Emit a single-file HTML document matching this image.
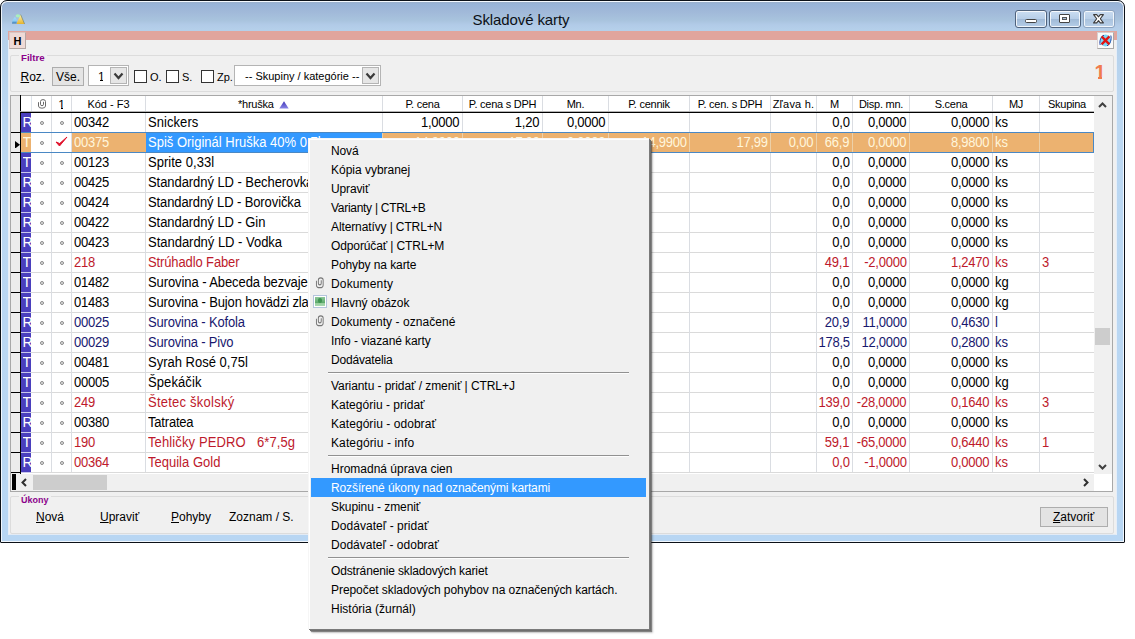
<!DOCTYPE html>
<html lang="sk"><head><meta charset="utf-8"><title>Skladové karty</title>
<style>
*{box-sizing:border-box;margin:0;padding:0}
html,body{width:1135px;height:639px;overflow:hidden;background:#fff}
body{position:relative;font-family:"Liberation Sans",sans-serif;font-size:13px;color:#000}
.a{position:absolute}
.t{position:absolute;white-space:nowrap;line-height:1}
#win{left:0;top:0;width:1125px;height:543px;border:1px solid #0c1118;border-radius:7px 7px 1px 1px;
 background:linear-gradient(180deg,#9caec4 0,#98b4d8 3px,#a1b9d9 11px,#a8c3dd 19px,#b2cbe8 24px,#b5d0ea 29px,#bcd8f2 110px,#b8d6f3 100%);box-shadow:inset 0 1px 0 0 rgba(245,250,255,.95),inset 0 0 0 1px rgba(255,255,255,.8)}
#client{left:8px;top:31px;width:1109px;height:504px;background:#f0f0f0;box-shadow:inset 1px 0 0 #e6eef8,inset -1px 0 0 #e6eef8,inset 0 -1px 0 #e3ebf5}
#title{left:0;width:1042px;top:12px;text-align:center;font-size:15px;letter-spacing:-0.1px;color:#0c1016}
.cb{top:10px;height:18px;border:1px solid #4f627c;border-radius:3px;background:linear-gradient(180deg,#cbdef2 0,#b7cee8 48%,#a0bad7 52%,#b6cee8 100%);box-shadow:inset 0 0 0 1px rgba(255,255,255,.8)}
.g{font-size:13px}
.h{font-size:11px;top:99px;letter-spacing:-0.25px}
.cell{position:absolute;white-space:nowrap;line-height:19px;height:19px;overflow:hidden;font-size:14px;transform:scaleX(.9286);transform-origin:0 50%}
.cr{transform-origin:100% 50%;text-align:right;overflow:visible}
.mi{position:absolute;left:23px;white-space:nowrap;font-size:12px;line-height:19px;height:19px;color:#000}
.sep{position:absolute;left:21px;width:300px;height:1px;background:#a0a0a0}
u{text-decoration:underline}
</style></head><body>
<div id="win" class="a"></div>

<div id="title" class="t">Skladové karty</div>
<svg class="a" style="left:10px;top:12px" width="17" height="14" viewBox="10 12 17 14"><defs><linearGradient id="iy" x1="0" y1="0" x2="0" y2="1"><stop offset="0" stop-color="#fdf3b0"/><stop offset="1" stop-color="#e6b42e"/></linearGradient><linearGradient id="ib" x1="0" y1="0" x2="0" y2="1"><stop offset="0" stop-color="#a6dcfa"/><stop offset=".6" stop-color="#8ccdf5"/><stop offset="1" stop-color="#2f6fa8"/></linearGradient></defs><polygon points="20.6,14.6 24.6,23.9 16.4,23.9" fill="url(#iy)"/><path d="M20.6 14.6 L24.6 23.9" stroke="#5f6f55" stroke-width=".8" fill="none" opacity=".7"/><ellipse cx="17.9" cy="15.8" rx="2.3" ry="1.6" fill="#a9f0bc"/><polygon points="15,16.8 17,20 16.6,23.6 12,23.6 12.6,20" fill="url(#ib)"/></svg>
<div class="a cb" style="left:1015px;width:32px"></div>
<div class="a cb" style="left:1049px;width:32px"></div>
<div class="a cb" style="left:1083px;width:32px;background:linear-gradient(180deg,#cadcf0 0,#bad0e9 48%,#aac3de 52%,#bad1ea 100%);border-color:#8ea4c0"></div>
<div class="a" style="left:1025px;top:18.5px;width:12px;height:4.5px;border:1px solid #444;border-radius:1.5px;background:#fff"></div>
<div class="a" style="left:1059px;top:14px;width:11px;height:9px;border:1px solid #444;border-radius:1px;background:#fff"></div><div class="a" style="left:1062px;top:17px;width:5px;height:3px;border:1px solid #555;background:#a9bfd8"></div>
<svg class="a" style="left:1093px;top:13.5px" width="11" height="10" viewBox="0 0 11 10"><path d="M0.6 0.6 L3.7 0.6 L5.5 2.9 L7.3 0.6 L10.4 0.6 L7.3 4.75 L10.4 8.9 L7.3 8.9 L5.5 6.6 L3.7 8.9 L0.6 8.9 L3.7 4.75 Z" fill="#fff" stroke="#3c3c3c" stroke-width="1.1" stroke-linejoin="round"/></svg>
<div id="client" class="a"></div>
<div class="a" style="left:8px;top:31px;width:1109px;height:9px;background:#e1a59d"></div>
<div class="a" style="left:9px;top:32px;width:17px;height:17px;border:1px solid #b3a7a4;border-top-color:#d9c6c2;border-left-color:#d9c6c2;background:#eedad6"></div><div class="t" style="left:13.5px;top:35.5px;font-size:11px;font-weight:bold">H</div>
<div class="a" style="left:1097px;top:32px;width:17px;height:17px;border:1px solid #d8d0d0;border-right-color:#a8a8a8;border-bottom-color:#a8a8a8;background:#fafafa"></div>
<svg class="a" style="left:1098px;top:33px" width="15" height="15" viewBox="0 0 15 15"><ellipse cx="7.5" cy="7.5" rx="5.6" ry="6" fill="#7ad8f8"/><path d="M2.2 12 C1 8,3 3.5,6 2.2" fill="none" stroke="#2848a8" stroke-width="1"/><path d="M12.8 2.5 C14 6.5,12 11.5,9 12.8" fill="none" stroke="#2848a8" stroke-width="1"/><path d="M3.6 3.4 L11.4 11.4 M11.4 3.4 L3.6 11.4" stroke="#e01414" stroke-width="2.3" fill="none"/></svg>
<div class="a" style="left:10px;top:55px;width:1104px;height:37px;border:1px solid #dcdcdc;border-radius:2px"></div>
<div class="t" style="left:19px;top:53px;font-size:9.7px;font-weight:bold;color:#8b008b;background:#f0f0f0;padding:0 2px">Filtre</div>
<div class="t" style="left:20.5px;top:70.5px;font-size:12px"><u>R</u>oz.</div>
<div class="a" style="left:52px;top:67px;width:32px;height:19px;border:1px solid #adadad;background:#e4e4e4"></div><div class="t" style="left:56px;top:70.5px;font-size:12px">Vše.</div>
<div class="a" style="left:88px;top:65px;width:41px;height:21px;border:1px solid #b4b4b4;background:#fff"></div><div class="t" style="left:98px;top:70.5px;font-size:12px">1</div>
<div class="a" style="left:97px;top:79.4px;width:3.4px;height:2.4px;background:#fff"></div><div class="a" style="left:102.6px;top:79.4px;width:3.2px;height:2.4px;background:#fff"></div>
<div class="a" style="left:110px;top:67px;width:17px;height:17px;border:1px solid #b4b4b4;background:#e6e6e6"></div>
<svg class="a" style="left:113px;top:72px" width="11" height="8" viewBox="0 0 11 8"><path d="M1.5 1.5 L5.5 6 L9.5 1.5" fill="none" stroke="#3a3a3a" stroke-width="2.2"/></svg>
<div class="a" style="left:134px;top:70px;width:13px;height:13px;border:1px solid #333;background:#fff"></div><div class="t" style="left:150px;top:72px;font-size:11px">O.</div>
<div class="a" style="left:166px;top:70px;width:13px;height:13px;border:1px solid #333;background:#fff"></div><div class="t" style="left:182px;top:72px;font-size:11px">S.</div>
<div class="a" style="left:201px;top:70px;width:13px;height:13px;border:1px solid #333;background:#fff"></div><div class="t" style="left:217px;top:72px;font-size:11px">Zp.</div>
<div class="a" style="left:234px;top:65px;width:147px;height:21px;border:1px solid #b4b4b4;background:#fff"></div><div class="t" style="left:245px;top:71px;font-size:11px">-- Skupiny / kategórie --</div>
<div class="a" style="left:362px;top:67px;width:17px;height:17px;border:1px solid #b4b4b4;background:#e6e6e6"></div>
<svg class="a" style="left:365px;top:72px" width="11" height="8" viewBox="0 0 11 8"><path d="M1.5 1.5 L5.5 6 L9.5 1.5" fill="none" stroke="#3a3a3a" stroke-width="2.2"/></svg>
<div class="t" style="left:1094.6px;top:62px;font-size:20px;font-weight:bold;color:#f07c4c">1</div>
<div class="a" style="left:1093px;top:76.6px;width:5.4px;height:4px;background:#f0f0f0"></div><div class="a" style="left:1102.4px;top:76.6px;width:5px;height:4px;background:#f0f0f0"></div>
<div class="a" style="left:10px;top:95px;width:1103px;height:397px;background:#fff;border:1px solid #a8a8a8"></div>
<div class="a" style="left:21px;top:96px;width:1073px;height:16px;background:#fff"></div>
<div class="a" style="left:11px;top:96px;width:9px;height:378px;background:#ececec"></div>
<div class="a" style="left:11px;top:132px;width:9px;height:1px;background:#000"></div>
<div class="a" style="left:31px;top:132px;width:1063px;height:1px;background:#dadada"></div>
<div class="a" style="left:11px;top:152px;width:9px;height:1px;background:#000"></div>
<div class="a" style="left:31px;top:152px;width:1063px;height:1px;background:#dadada"></div>
<div class="a" style="left:11px;top:172px;width:9px;height:1px;background:#000"></div>
<div class="a" style="left:31px;top:172px;width:1063px;height:1px;background:#dadada"></div>
<div class="a" style="left:11px;top:192px;width:9px;height:1px;background:#000"></div>
<div class="a" style="left:31px;top:192px;width:1063px;height:1px;background:#dadada"></div>
<div class="a" style="left:11px;top:212px;width:9px;height:1px;background:#000"></div>
<div class="a" style="left:31px;top:212px;width:1063px;height:1px;background:#dadada"></div>
<div class="a" style="left:11px;top:232px;width:9px;height:1px;background:#000"></div>
<div class="a" style="left:31px;top:232px;width:1063px;height:1px;background:#dadada"></div>
<div class="a" style="left:11px;top:252px;width:9px;height:1px;background:#000"></div>
<div class="a" style="left:31px;top:252px;width:1063px;height:1px;background:#dadada"></div>
<div class="a" style="left:11px;top:272px;width:9px;height:1px;background:#000"></div>
<div class="a" style="left:31px;top:272px;width:1063px;height:1px;background:#dadada"></div>
<div class="a" style="left:11px;top:292px;width:9px;height:1px;background:#000"></div>
<div class="a" style="left:31px;top:292px;width:1063px;height:1px;background:#dadada"></div>
<div class="a" style="left:11px;top:312px;width:9px;height:1px;background:#000"></div>
<div class="a" style="left:31px;top:312px;width:1063px;height:1px;background:#dadada"></div>
<div class="a" style="left:11px;top:332px;width:9px;height:1px;background:#000"></div>
<div class="a" style="left:31px;top:332px;width:1063px;height:1px;background:#dadada"></div>
<div class="a" style="left:11px;top:352px;width:9px;height:1px;background:#000"></div>
<div class="a" style="left:31px;top:352px;width:1063px;height:1px;background:#dadada"></div>
<div class="a" style="left:11px;top:372px;width:9px;height:1px;background:#000"></div>
<div class="a" style="left:31px;top:372px;width:1063px;height:1px;background:#dadada"></div>
<div class="a" style="left:11px;top:392px;width:9px;height:1px;background:#000"></div>
<div class="a" style="left:31px;top:392px;width:1063px;height:1px;background:#dadada"></div>
<div class="a" style="left:11px;top:412px;width:9px;height:1px;background:#000"></div>
<div class="a" style="left:31px;top:412px;width:1063px;height:1px;background:#dadada"></div>
<div class="a" style="left:11px;top:432px;width:9px;height:1px;background:#000"></div>
<div class="a" style="left:31px;top:432px;width:1063px;height:1px;background:#dadada"></div>
<div class="a" style="left:11px;top:452px;width:9px;height:1px;background:#000"></div>
<div class="a" style="left:31px;top:452px;width:1063px;height:1px;background:#dadada"></div>
<div class="a" style="left:11px;top:472px;width:9px;height:1px;background:#000"></div>
<div class="a" style="left:31px;top:472px;width:1063px;height:1px;background:#dadada"></div>
<div class="a" style="left:51px;top:96px;width:1px;height:376px;background:#dadde2"></div>
<div class="a" style="left:71px;top:96px;width:1px;height:376px;background:#dadde2"></div>
<div class="a" style="left:145px;top:96px;width:1px;height:376px;background:#dadde2"></div>
<div class="a" style="left:382px;top:96px;width:1px;height:376px;background:#dadde2"></div>
<div class="a" style="left:462px;top:96px;width:1px;height:376px;background:#dadde2"></div>
<div class="a" style="left:542px;top:96px;width:1px;height:376px;background:#dadde2"></div>
<div class="a" style="left:608px;top:96px;width:1px;height:376px;background:#dadde2"></div>
<div class="a" style="left:689px;top:96px;width:1px;height:376px;background:#dadde2"></div>
<div class="a" style="left:770px;top:96px;width:1px;height:376px;background:#dadde2"></div>
<div class="a" style="left:816px;top:96px;width:1px;height:376px;background:#dadde2"></div>
<div class="a" style="left:852px;top:96px;width:1px;height:376px;background:#dadde2"></div>
<div class="a" style="left:909px;top:96px;width:1px;height:376px;background:#dadde2"></div>
<div class="a" style="left:992px;top:96px;width:1px;height:376px;background:#dadde2"></div>
<div class="a" style="left:1039px;top:96px;width:1px;height:376px;background:#dadde2"></div>
<div class="a" style="left:21px;top:113px;width:10px;height:20px;background:#4a3fbd"></div>
<div class="cell" style="left:22.5px;top:113px;width:8.5px;transform:none;color:#fff;overflow:hidden">R</div>
<div class="a" style="left:21px;top:133px;width:10px;height:20px;background:#ecb270"></div>
<div class="cell" style="left:22.5px;top:133px;width:8.5px;transform:none;color:#fff8e0;overflow:hidden">T</div>
<div class="a" style="left:21px;top:153px;width:10px;height:20px;background:#4a3fbd"></div>
<div class="cell" style="left:22.5px;top:153px;width:8.5px;transform:none;color:#fff;overflow:hidden">T</div>
<div class="a" style="left:21px;top:173px;width:10px;height:20px;background:#4a3fbd"></div>
<div class="cell" style="left:22.5px;top:173px;width:8.5px;transform:none;color:#fff;overflow:hidden">R</div>
<div class="a" style="left:21px;top:193px;width:10px;height:20px;background:#4a3fbd"></div>
<div class="cell" style="left:22.5px;top:193px;width:8.5px;transform:none;color:#fff;overflow:hidden">R</div>
<div class="a" style="left:21px;top:213px;width:10px;height:20px;background:#4a3fbd"></div>
<div class="cell" style="left:22.5px;top:213px;width:8.5px;transform:none;color:#fff;overflow:hidden">R</div>
<div class="a" style="left:21px;top:233px;width:10px;height:20px;background:#4a3fbd"></div>
<div class="cell" style="left:22.5px;top:233px;width:8.5px;transform:none;color:#fff;overflow:hidden">R</div>
<div class="a" style="left:21px;top:253px;width:10px;height:20px;background:#4a3fbd"></div>
<div class="cell" style="left:22.5px;top:253px;width:8.5px;transform:none;color:#fff;overflow:hidden">T</div>
<div class="a" style="left:21px;top:273px;width:10px;height:20px;background:#4a3fbd"></div>
<div class="cell" style="left:22.5px;top:273px;width:8.5px;transform:none;color:#fff;overflow:hidden">T</div>
<div class="a" style="left:21px;top:293px;width:10px;height:20px;background:#4a3fbd"></div>
<div class="cell" style="left:22.5px;top:293px;width:8.5px;transform:none;color:#fff;overflow:hidden">T</div>
<div class="a" style="left:21px;top:313px;width:10px;height:20px;background:#4a3fbd"></div>
<div class="cell" style="left:22.5px;top:313px;width:8.5px;transform:none;color:#fff;overflow:hidden">R</div>
<div class="a" style="left:21px;top:333px;width:10px;height:20px;background:#4a3fbd"></div>
<div class="cell" style="left:22.5px;top:333px;width:8.5px;transform:none;color:#fff;overflow:hidden">R</div>
<div class="a" style="left:21px;top:353px;width:10px;height:20px;background:#4a3fbd"></div>
<div class="cell" style="left:22.5px;top:353px;width:8.5px;transform:none;color:#fff;overflow:hidden">T</div>
<div class="a" style="left:21px;top:373px;width:10px;height:20px;background:#4a3fbd"></div>
<div class="cell" style="left:22.5px;top:373px;width:8.5px;transform:none;color:#fff;overflow:hidden">T</div>
<div class="a" style="left:21px;top:393px;width:10px;height:20px;background:#4a3fbd"></div>
<div class="cell" style="left:22.5px;top:393px;width:8.5px;transform:none;color:#fff;overflow:hidden">T</div>
<div class="a" style="left:21px;top:413px;width:10px;height:20px;background:#4a3fbd"></div>
<div class="cell" style="left:22.5px;top:413px;width:8.5px;transform:none;color:#fff;overflow:hidden">R</div>
<div class="a" style="left:21px;top:433px;width:10px;height:20px;background:#4a3fbd"></div>
<div class="cell" style="left:22.5px;top:433px;width:8.5px;transform:none;color:#fff;overflow:hidden">T</div>
<div class="a" style="left:21px;top:453px;width:10px;height:20px;background:#4a3fbd"></div>
<div class="cell" style="left:22.5px;top:453px;width:8.5px;transform:none;color:#fff;overflow:hidden">R</div>
<div class="a" style="left:21px;top:132px;width:10px;height:1px;background:#c9c6ee"></div>
<div class="a" style="left:21px;top:152px;width:10px;height:1px;background:#c9c6ee"></div>
<div class="a" style="left:21px;top:172px;width:10px;height:1px;background:#c9c6ee"></div>
<div class="a" style="left:21px;top:192px;width:10px;height:1px;background:#c9c6ee"></div>
<div class="a" style="left:21px;top:212px;width:10px;height:1px;background:#c9c6ee"></div>
<div class="a" style="left:21px;top:232px;width:10px;height:1px;background:#c9c6ee"></div>
<div class="a" style="left:21px;top:252px;width:10px;height:1px;background:#c9c6ee"></div>
<div class="a" style="left:21px;top:272px;width:10px;height:1px;background:#c9c6ee"></div>
<div class="a" style="left:21px;top:292px;width:10px;height:1px;background:#c9c6ee"></div>
<div class="a" style="left:21px;top:312px;width:10px;height:1px;background:#c9c6ee"></div>
<div class="a" style="left:21px;top:332px;width:10px;height:1px;background:#c9c6ee"></div>
<div class="a" style="left:21px;top:352px;width:10px;height:1px;background:#c9c6ee"></div>
<div class="a" style="left:21px;top:372px;width:10px;height:1px;background:#c9c6ee"></div>
<div class="a" style="left:21px;top:392px;width:10px;height:1px;background:#c9c6ee"></div>
<div class="a" style="left:21px;top:412px;width:10px;height:1px;background:#c9c6ee"></div>
<div class="a" style="left:21px;top:432px;width:10px;height:1px;background:#c9c6ee"></div>
<div class="a" style="left:21px;top:452px;width:10px;height:1px;background:#c9c6ee"></div>
<div class="a" style="left:21px;top:472px;width:10px;height:1px;background:#c9c6ee"></div>
<div class="a" style="left:72px;top:133px;width:1022px;height:19px;background:#ecb270"></div>
<div class="a" style="left:146px;top:133px;width:236px;height:19px;background:#3399ff"></div>
<div class="a" style="left:21px;top:132px;width:1073px;height:1px;background:#4a88c4"></div>
<div class="a" style="left:21px;top:152px;width:1073px;height:1px;background:#4a88c4"></div>
<div class="a" style="left:382px;top:133px;width:1px;height:19px;background:#ecd0a8"></div>
<div class="a" style="left:462px;top:133px;width:1px;height:19px;background:#ecd0a8"></div>
<div class="a" style="left:542px;top:133px;width:1px;height:19px;background:#ecd0a8"></div>
<div class="a" style="left:608px;top:133px;width:1px;height:19px;background:#ecd0a8"></div>
<div class="a" style="left:689px;top:133px;width:1px;height:19px;background:#ecd0a8"></div>
<div class="a" style="left:770px;top:133px;width:1px;height:19px;background:#ecd0a8"></div>
<div class="a" style="left:816px;top:133px;width:1px;height:19px;background:#ecd0a8"></div>
<div class="a" style="left:852px;top:133px;width:1px;height:19px;background:#ecd0a8"></div>
<div class="a" style="left:909px;top:133px;width:1px;height:19px;background:#ecd0a8"></div>
<div class="a" style="left:992px;top:133px;width:1px;height:19px;background:#ecd0a8"></div>
<div class="a" style="left:1039px;top:133px;width:1px;height:19px;background:#ecd0a8"></div>
<div class="a" style="left:31px;top:96px;width:1px;height:15px;background:#dde3ea"></div>
<div class="a" style="left:1093px;top:132px;width:1px;height:21px;background:#4a88c4"></div>
<div class="a" style="left:20px;top:95px;width:1px;height:379px;background:#000"></div>
<div class="a" style="left:20px;top:111px;width:1074px;height:1px;background:#b4b4b4"></div><div class="a" style="left:20px;top:112px;width:1074px;height:1px;background:#000"></div>
<div class="t h" style="left:52px;width:19px;text-align:center"><span style="font-size:12px">1</span></div>
<div class="a" style="left:57.5px;top:107.4px;width:3.3px;height:2.4px;background:#fff"></div><div class="a" style="left:63px;top:107.4px;width:3px;height:2.4px;background:#fff"></div>
<div class="t h" style="left:72px;width:73px;text-align:center"><span style="letter-spacing:0">Kód - F3</span></div>
<div class="t h" style="left:238px">*hruška</div>
<svg class="a" style="left:278.5px;top:100.5px" width="10" height="8" viewBox="0 0 10 8"><defs><linearGradient id="tg" x1="0" y1="0" x2="0" y2="1"><stop offset="0" stop-color="#3f35b8"/><stop offset="1" stop-color="#8a86e6"/></linearGradient></defs><polygon points="5,0.3 9.7,7.6 0.3,7.6" fill="url(#tg)"/></svg>
<div class="t h" style="left:383px;width:79px;text-align:center">P. cena</div>
<div class="t h" style="left:463px;width:79px;text-align:center">P. cena s DPH</div>
<div class="t h" style="left:543px;width:65px;text-align:center">Mn.</div>
<div class="t h" style="left:609px;width:80px;text-align:center">P. cennik</div>
<div class="t h" style="left:690px;width:80px;text-align:center">P. cen. s DPH</div>
<div class="t h" style="left:771px;width:45px;text-align:center"><span style="letter-spacing:0.22px">Zľava h.</span></div>
<div class="t h" style="left:817px;width:35px;text-align:center">M</div>
<div class="t h" style="left:853px;width:56px;text-align:center">Disp. mn.</div>
<div class="t h" style="left:910px;width:82px;text-align:center">S.cena</div>
<div class="t h" style="left:993px;width:46px;text-align:center">MJ</div>
<div class="t h" style="left:1040px;width:54px;text-align:center">Skupina</div>
<svg class="a" style="left:37px;top:98px" width="10" height="11" viewBox="0 0 10 11"><path d="M1.5 4.2 V8 A3.5 2.2 0 0 0 8.5 8 V3.5 A2.5 1.9 0 0 0 3.5 3.5 V6.3 A1.5 1.4 0 0 0 6.5 6.3 V3.8" fill="none" stroke="#6a6a6a" stroke-width="1"/></svg>
<div class="a" style="left:40px;top:121px;width:4px;height:4px;border-radius:2px;border:1px solid #8a8a8a;background:#e4e4e4"></div>
<div class="a" style="left:60px;top:121px;width:4px;height:4px;border-radius:2px;border:1px solid #8a8a8a;background:#e4e4e4"></div>
<div class="cell" style="left:74px;top:113px;width:70px;letter-spacing:-0.25px;color:#000">00342</div>
<div class="cell" style="left:148px;top:113px;width:235px;letter-spacing:0.071px;color:#000">Snickers</div>
<div class="cell cr" style="right:675.6px;top:113px;letter-spacing:-0.25px;color:#000">1,0000</div>
<div class="cell cr" style="right:595.6px;top:113px;letter-spacing:-0.25px;color:#000">1,20</div>
<div class="cell cr" style="right:529.6px;top:113px;letter-spacing:-0.25px;color:#000">0,0000</div>
<div class="cell cr" style="right:285.6px;top:113px;letter-spacing:-0.25px;color:#000">0,0</div>
<div class="cell cr" style="right:228.6px;top:113px;letter-spacing:-0.25px;color:#000">0,0000</div>
<div class="cell cr" style="right:145.6px;top:113px;letter-spacing:-0.25px;color:#000">0,0000</div>
<div class="cell" style="left:995px;top:113px;width:44px;color:#000">ks</div>
<div class="a" style="left:40px;top:141px;width:4px;height:4px;border-radius:2px;border:1px solid #8a8a8a;background:#e4e4e4"></div>
<svg class="a" style="left:55px;top:136.2px" width="13" height="11" viewBox="0 0 13 11"><path d="M1 6 L4.5 10 L12 1 L4.7 7.5 Z" fill="#e0102a" stroke="#e0102a" stroke-width="1" stroke-linejoin="round"/></svg>
<div class="cell" style="left:74px;top:133px;width:70px;letter-spacing:-0.25px;color:#fff6dc">00375</div>
<div class="cell" style="left:148px;top:133px;width:235px;letter-spacing:0.000px;color:#fff">Spiš Originál Hruška 40% 0,7l</div>
<div class="cell cr" style="right:675.6px;top:133px;letter-spacing:-0.25px;color:#fff6dc">14,9900</div>
<div class="cell cr" style="right:595.6px;top:133px;letter-spacing:-0.25px;color:#fff6dc">17,99</div>
<div class="cell cr" style="right:529.6px;top:133px;letter-spacing:-0.25px;color:#fff6dc">0,0000</div>
<div class="cell cr" style="right:448.6px;top:133px;letter-spacing:-0.25px;color:#fff6dc">14,9900</div>
<div class="cell cr" style="right:367.6px;top:133px;letter-spacing:-0.25px;color:#fff6dc">17,99</div>
<div class="cell cr" style="right:321.6px;top:133px;letter-spacing:-0.25px;color:#fff6dc">0,00</div>
<div class="cell cr" style="right:285.6px;top:133px;letter-spacing:-0.25px;color:#fff6dc">66,9</div>
<div class="cell cr" style="right:228.6px;top:133px;letter-spacing:-0.25px;color:#fff6dc">0,0000</div>
<div class="cell cr" style="right:145.6px;top:133px;letter-spacing:-0.25px;color:#fff6dc">8,9800</div>
<div class="cell" style="left:995px;top:133px;width:44px;color:#fff6dc">ks</div>
<div class="a" style="left:40px;top:161px;width:4px;height:4px;border-radius:2px;border:1px solid #8a8a8a;background:#e4e4e4"></div>
<div class="a" style="left:60px;top:161px;width:4px;height:4px;border-radius:2px;border:1px solid #8a8a8a;background:#e4e4e4"></div>
<div class="cell" style="left:74px;top:153px;width:70px;letter-spacing:-0.25px;color:#000">00123</div>
<div class="cell" style="left:148px;top:153px;width:235px;letter-spacing:0.027px;color:#000">Sprite 0,33l</div>
<div class="cell cr" style="right:285.6px;top:153px;letter-spacing:-0.25px;color:#000">0,0</div>
<div class="cell cr" style="right:228.6px;top:153px;letter-spacing:-0.25px;color:#000">0,0000</div>
<div class="cell cr" style="right:145.6px;top:153px;letter-spacing:-0.25px;color:#000">0,0000</div>
<div class="cell" style="left:995px;top:153px;width:44px;color:#000">ks</div>
<div class="a" style="left:40px;top:181px;width:4px;height:4px;border-radius:2px;border:1px solid #8a8a8a;background:#e4e4e4"></div>
<div class="a" style="left:60px;top:181px;width:4px;height:4px;border-radius:2px;border:1px solid #8a8a8a;background:#e4e4e4"></div>
<div class="cell" style="left:74px;top:173px;width:70px;letter-spacing:-0.25px;color:#000">00425</div>
<div class="cell" style="left:148px;top:173px;width:235px;letter-spacing:-0.068px;color:#000">Standardný LD - Becherovka</div>
<div class="cell cr" style="right:285.6px;top:173px;letter-spacing:-0.25px;color:#000">0,0</div>
<div class="cell cr" style="right:228.6px;top:173px;letter-spacing:-0.25px;color:#000">0,0000</div>
<div class="cell cr" style="right:145.6px;top:173px;letter-spacing:-0.25px;color:#000">0,0000</div>
<div class="cell" style="left:995px;top:173px;width:44px;color:#000">ks</div>
<div class="a" style="left:40px;top:201px;width:4px;height:4px;border-radius:2px;border:1px solid #8a8a8a;background:#e4e4e4"></div>
<div class="a" style="left:60px;top:201px;width:4px;height:4px;border-radius:2px;border:1px solid #8a8a8a;background:#e4e4e4"></div>
<div class="cell" style="left:74px;top:193px;width:70px;letter-spacing:-0.25px;color:#000">00424</div>
<div class="cell" style="left:148px;top:193px;width:235px;letter-spacing:-0.108px;color:#000">Standardný LD - Borovička</div>
<div class="cell cr" style="right:285.6px;top:193px;letter-spacing:-0.25px;color:#000">0,0</div>
<div class="cell cr" style="right:228.6px;top:193px;letter-spacing:-0.25px;color:#000">0,0000</div>
<div class="cell cr" style="right:145.6px;top:193px;letter-spacing:-0.25px;color:#000">0,0000</div>
<div class="cell" style="left:995px;top:193px;width:44px;color:#000">ks</div>
<div class="a" style="left:40px;top:221px;width:4px;height:4px;border-radius:2px;border:1px solid #8a8a8a;background:#e4e4e4"></div>
<div class="a" style="left:60px;top:221px;width:4px;height:4px;border-radius:2px;border:1px solid #8a8a8a;background:#e4e4e4"></div>
<div class="cell" style="left:74px;top:213px;width:70px;letter-spacing:-0.25px;color:#000">00422</div>
<div class="cell" style="left:148px;top:213px;width:235px;letter-spacing:-0.067px;color:#000">Standardný LD - Gin</div>
<div class="cell cr" style="right:285.6px;top:213px;letter-spacing:-0.25px;color:#000">0,0</div>
<div class="cell cr" style="right:228.6px;top:213px;letter-spacing:-0.25px;color:#000">0,0000</div>
<div class="cell cr" style="right:145.6px;top:213px;letter-spacing:-0.25px;color:#000">0,0000</div>
<div class="cell" style="left:995px;top:213px;width:44px;color:#000">ks</div>
<div class="a" style="left:40px;top:241px;width:4px;height:4px;border-radius:2px;border:1px solid #8a8a8a;background:#e4e4e4"></div>
<div class="a" style="left:60px;top:241px;width:4px;height:4px;border-radius:2px;border:1px solid #8a8a8a;background:#e4e4e4"></div>
<div class="cell" style="left:74px;top:233px;width:70px;letter-spacing:-0.25px;color:#000">00423</div>
<div class="cell" style="left:148px;top:233px;width:235px;letter-spacing:-0.020px;color:#000">Standardný LD - Vodka</div>
<div class="cell cr" style="right:285.6px;top:233px;letter-spacing:-0.25px;color:#000">0,0</div>
<div class="cell cr" style="right:228.6px;top:233px;letter-spacing:-0.25px;color:#000">0,0000</div>
<div class="cell cr" style="right:145.6px;top:233px;letter-spacing:-0.25px;color:#000">0,0000</div>
<div class="cell" style="left:995px;top:233px;width:44px;color:#000">ks</div>
<div class="a" style="left:40px;top:261px;width:4px;height:4px;border-radius:2px;border:1px solid #8a8a8a;background:#e4e4e4"></div>
<div class="a" style="left:60px;top:261px;width:4px;height:4px;border-radius:2px;border:1px solid #8a8a8a;background:#e4e4e4"></div>
<div class="cell" style="left:74px;top:253px;width:70px;letter-spacing:-0.25px;color:#bd1a2c">218</div>
<div class="cell" style="left:148px;top:253px;width:235px;letter-spacing:-0.129px;color:#bd1a2c">Strúhadlo Faber</div>
<div class="cell cr" style="right:285.6px;top:253px;letter-spacing:-0.25px;color:#bd1a2c">49,1</div>
<div class="cell cr" style="right:228.6px;top:253px;letter-spacing:-0.25px;color:#bd1a2c">-2,0000</div>
<div class="cell cr" style="right:145.6px;top:253px;letter-spacing:-0.25px;color:#bd1a2c">1,2470</div>
<div class="cell" style="left:995px;top:253px;width:44px;color:#bd1a2c">ks</div>
<div class="cell" style="left:1042px;top:253px;width:52px;color:#bd1a2c">3</div>
<div class="a" style="left:40px;top:281px;width:4px;height:4px;border-radius:2px;border:1px solid #8a8a8a;background:#e4e4e4"></div>
<div class="a" style="left:60px;top:281px;width:4px;height:4px;border-radius:2px;border:1px solid #8a8a8a;background:#e4e4e4"></div>
<div class="cell" style="left:74px;top:273px;width:70px;letter-spacing:-0.25px;color:#000">01482</div>
<div class="cell" style="left:148px;top:273px;width:235px;letter-spacing:-0.092px;color:#000">Surovina - Abeceda bezvaječná</div>
<div class="cell cr" style="right:285.6px;top:273px;letter-spacing:-0.25px;color:#000">0,0</div>
<div class="cell cr" style="right:228.6px;top:273px;letter-spacing:-0.25px;color:#000">0,0000</div>
<div class="cell cr" style="right:145.6px;top:273px;letter-spacing:-0.25px;color:#000">0,0000</div>
<div class="cell" style="left:995px;top:273px;width:44px;color:#000">kg</div>
<div class="a" style="left:40px;top:301px;width:4px;height:4px;border-radius:2px;border:1px solid #8a8a8a;background:#e4e4e4"></div>
<div class="a" style="left:60px;top:301px;width:4px;height:4px;border-radius:2px;border:1px solid #8a8a8a;background:#e4e4e4"></div>
<div class="cell" style="left:74px;top:293px;width:70px;letter-spacing:-0.25px;color:#000">01483</div>
<div class="cell" style="left:148px;top:293px;width:235px;letter-spacing:-0.157px;color:#000">Surovina - Bujon hovädzi zlatý</div>
<div class="cell cr" style="right:285.6px;top:293px;letter-spacing:-0.25px;color:#000">0,0</div>
<div class="cell cr" style="right:228.6px;top:293px;letter-spacing:-0.25px;color:#000">0,0000</div>
<div class="cell cr" style="right:145.6px;top:293px;letter-spacing:-0.25px;color:#000">0,0000</div>
<div class="cell" style="left:995px;top:293px;width:44px;color:#000">kg</div>
<div class="a" style="left:40px;top:321px;width:4px;height:4px;border-radius:2px;border:1px solid #8a8a8a;background:#e4e4e4"></div>
<div class="a" style="left:60px;top:321px;width:4px;height:4px;border-radius:2px;border:1px solid #8a8a8a;background:#e4e4e4"></div>
<div class="cell" style="left:74px;top:313px;width:70px;letter-spacing:-0.25px;color:#18186e">00025</div>
<div class="cell" style="left:148px;top:313px;width:235px;letter-spacing:-0.187px;color:#18186e">Surovina - Kofola</div>
<div class="cell cr" style="right:285.6px;top:313px;letter-spacing:-0.25px;color:#18186e">20,9</div>
<div class="cell cr" style="right:228.6px;top:313px;letter-spacing:-0.25px;color:#18186e">11,0000</div>
<div class="cell cr" style="right:145.6px;top:313px;letter-spacing:-0.25px;color:#18186e">0,4630</div>
<div class="cell" style="left:995px;top:313px;width:44px;color:#18186e">l</div>
<div class="a" style="left:40px;top:341px;width:4px;height:4px;border-radius:2px;border:1px solid #8a8a8a;background:#e4e4e4"></div>
<div class="a" style="left:60px;top:341px;width:4px;height:4px;border-radius:2px;border:1px solid #8a8a8a;background:#e4e4e4"></div>
<div class="cell" style="left:74px;top:333px;width:70px;letter-spacing:-0.25px;color:#18186e">00029</div>
<div class="cell" style="left:148px;top:333px;width:235px;letter-spacing:-0.200px;color:#18186e">Surovina - Pivo</div>
<div class="cell cr" style="right:285.6px;top:333px;letter-spacing:-0.25px;color:#18186e">178,5</div>
<div class="cell cr" style="right:228.6px;top:333px;letter-spacing:-0.25px;color:#18186e">12,0000</div>
<div class="cell cr" style="right:145.6px;top:333px;letter-spacing:-0.25px;color:#18186e">0,2800</div>
<div class="cell" style="left:995px;top:333px;width:44px;color:#18186e">ks</div>
<div class="a" style="left:40px;top:361px;width:4px;height:4px;border-radius:2px;border:1px solid #8a8a8a;background:#e4e4e4"></div>
<div class="a" style="left:60px;top:361px;width:4px;height:4px;border-radius:2px;border:1px solid #8a8a8a;background:#e4e4e4"></div>
<div class="cell" style="left:74px;top:353px;width:70px;letter-spacing:-0.25px;color:#000">00481</div>
<div class="cell" style="left:148px;top:353px;width:235px;letter-spacing:0.007px;color:#000">Syrah Rosé 0,75l</div>
<div class="cell cr" style="right:285.6px;top:353px;letter-spacing:-0.25px;color:#000">0,0</div>
<div class="cell cr" style="right:228.6px;top:353px;letter-spacing:-0.25px;color:#000">0,0000</div>
<div class="cell cr" style="right:145.6px;top:353px;letter-spacing:-0.25px;color:#000">0,0000</div>
<div class="cell" style="left:995px;top:353px;width:44px;color:#000">ks</div>
<div class="a" style="left:40px;top:381px;width:4px;height:4px;border-radius:2px;border:1px solid #8a8a8a;background:#e4e4e4"></div>
<div class="a" style="left:60px;top:381px;width:4px;height:4px;border-radius:2px;border:1px solid #8a8a8a;background:#e4e4e4"></div>
<div class="cell" style="left:74px;top:373px;width:70px;letter-spacing:-0.25px;color:#000">00005</div>
<div class="cell" style="left:148px;top:373px;width:235px;letter-spacing:0.100px;color:#000">Špekáčik</div>
<div class="cell cr" style="right:285.6px;top:373px;letter-spacing:-0.25px;color:#000">0,0</div>
<div class="cell cr" style="right:228.6px;top:373px;letter-spacing:-0.25px;color:#000">0,0000</div>
<div class="cell cr" style="right:145.6px;top:373px;letter-spacing:-0.25px;color:#000">0,0000</div>
<div class="cell" style="left:995px;top:373px;width:44px;color:#000">kg</div>
<div class="a" style="left:40px;top:401px;width:4px;height:4px;border-radius:2px;border:1px solid #8a8a8a;background:#e4e4e4"></div>
<div class="a" style="left:60px;top:401px;width:4px;height:4px;border-radius:2px;border:1px solid #8a8a8a;background:#e4e4e4"></div>
<div class="cell" style="left:74px;top:393px;width:70px;letter-spacing:-0.25px;color:#bd1a2c">249</div>
<div class="cell" style="left:148px;top:393px;width:235px;letter-spacing:0.254px;color:#bd1a2c">Štetec školský</div>
<div class="cell cr" style="right:285.6px;top:393px;letter-spacing:-0.25px;color:#bd1a2c">139,0</div>
<div class="cell cr" style="right:228.6px;top:393px;letter-spacing:-0.25px;color:#bd1a2c">-28,0000</div>
<div class="cell cr" style="right:145.6px;top:393px;letter-spacing:-0.25px;color:#bd1a2c">0,1640</div>
<div class="cell" style="left:995px;top:393px;width:44px;color:#bd1a2c">ks</div>
<div class="cell" style="left:1042px;top:393px;width:52px;color:#bd1a2c">3</div>
<div class="a" style="left:40px;top:421px;width:4px;height:4px;border-radius:2px;border:1px solid #8a8a8a;background:#e4e4e4"></div>
<div class="a" style="left:60px;top:421px;width:4px;height:4px;border-radius:2px;border:1px solid #8a8a8a;background:#e4e4e4"></div>
<div class="cell" style="left:74px;top:413px;width:70px;letter-spacing:-0.25px;color:#000">00380</div>
<div class="cell" style="left:148px;top:413px;width:235px;letter-spacing:-0.214px;color:#000">Tatratea</div>
<div class="cell cr" style="right:285.6px;top:413px;letter-spacing:-0.25px;color:#000">0,0</div>
<div class="cell cr" style="right:228.6px;top:413px;letter-spacing:-0.25px;color:#000">0,0000</div>
<div class="cell cr" style="right:145.6px;top:413px;letter-spacing:-0.25px;color:#000">0,0000</div>
<div class="cell" style="left:995px;top:413px;width:44px;color:#000">ks</div>
<div class="a" style="left:40px;top:441px;width:4px;height:4px;border-radius:2px;border:1px solid #8a8a8a;background:#e4e4e4"></div>
<div class="a" style="left:60px;top:441px;width:4px;height:4px;border-radius:2px;border:1px solid #8a8a8a;background:#e4e4e4"></div>
<div class="cell" style="left:74px;top:433px;width:70px;letter-spacing:-0.25px;color:#bd1a2c">190</div>
<div class="cell" style="left:148px;top:433px;width:235px;letter-spacing:0.127px;color:#bd1a2c">Tehličky PEDRO   6*7,5g</div>
<div class="cell cr" style="right:285.6px;top:433px;letter-spacing:-0.25px;color:#bd1a2c">59,1</div>
<div class="cell cr" style="right:228.6px;top:433px;letter-spacing:-0.25px;color:#bd1a2c">-65,0000</div>
<div class="cell cr" style="right:145.6px;top:433px;letter-spacing:-0.25px;color:#bd1a2c">0,6440</div>
<div class="cell" style="left:995px;top:433px;width:44px;color:#bd1a2c">ks</div>
<div class="cell" style="left:1042px;top:433px;width:52px;color:#bd1a2c">1</div>
<div class="a" style="left:40px;top:461px;width:4px;height:4px;border-radius:2px;border:1px solid #8a8a8a;background:#e4e4e4"></div>
<div class="a" style="left:60px;top:461px;width:4px;height:4px;border-radius:2px;border:1px solid #8a8a8a;background:#e4e4e4"></div>
<div class="cell" style="left:74px;top:453px;width:70px;letter-spacing:-0.25px;color:#bd1a2c">00364</div>
<div class="cell" style="left:148px;top:453px;width:235px;letter-spacing:0.009px;color:#bd1a2c">Tequila Gold</div>
<div class="cell cr" style="right:285.6px;top:453px;letter-spacing:-0.25px;color:#bd1a2c">0,0</div>
<div class="cell cr" style="right:228.6px;top:453px;letter-spacing:-0.25px;color:#bd1a2c">-1,0000</div>
<div class="cell cr" style="right:145.6px;top:453px;letter-spacing:-0.25px;color:#bd1a2c">0,0000</div>
<div class="cell" style="left:995px;top:453px;width:44px;color:#bd1a2c">ks</div>
<svg class="a" style="left:15px;top:140.7px" width="5" height="7.6" viewBox="0 0 5 9" preserveAspectRatio="none"><polygon points="0,0 5,4.5 0,9" fill="#000"/></svg>
<div class="a" style="left:1094px;top:96px;width:18px;height:378px;background:#f0f0f0"></div>
<div class="a" style="left:1095px;top:328px;width:15px;height:17px;background:#cdcdcd"></div>
<svg class="a" style="left:1098px;top:101.5px" width="9" height="6" viewBox="0 0 9 6"><path d="M1 5 L4.5 1.5 L8 5" fill="none" stroke="#404040" stroke-width="2"/></svg>
<svg class="a" style="left:1098px;top:464px" width="9" height="6" viewBox="0 0 9 6"><path d="M1 1 L4.5 4.5 L8 1" fill="none" stroke="#404040" stroke-width="2"/></svg>
<div class="a" style="left:11px;top:474px;width:1083px;height:17px;background:#f0f0f0"></div>
<div class="a" style="left:12px;top:474px;width:4px;height:16px;background:#000"></div>
<div class="a" style="left:33px;top:475px;width:74px;height:15px;background:#cdcdcd"></div>
<svg class="a" style="left:21px;top:478px" width="6" height="9" viewBox="0 0 6 9"><path d="M5 1 L1.5 4.5 L5 8" fill="none" stroke="#303030" stroke-width="2"/></svg>
<svg class="a" style="left:1083px;top:478px" width="6" height="9" viewBox="0 0 6 9"><path d="M1 1 L4.5 4.5 L1 8" fill="none" stroke="#303030" stroke-width="2"/></svg>
<div class="a" style="left:10px;top:496px;width:1104px;height:38px;border:1px solid #dcdcdc;border-radius:2px"></div>
<div class="t" style="left:19px;top:495.5px;font-size:9px;font-weight:bold;color:#8b008b;background:#f0f0f0;padding:0 2px">Úkony</div>
<div class="t g" style="left:36px;top:510.5px;font-size:12px"><u>N</u>ová</div>
<div class="t g" style="left:100px;top:510.5px;font-size:12px"><u>U</u>praviť</div>
<div class="t g" style="left:171px;top:510.5px;font-size:12px"><u>P</u>ohyby</div>
<div class="t g" style="left:229px;top:510.5px;font-size:12px">Zoznam / S.</div>
<div class="a" style="left:1040px;top:507px;width:68px;height:20px;border:1px solid #adadad;background:#e3e3e3"></div><div class="t" style="left:1053px;top:510.5px;font-size:12px"><u>Z</u>atvoriť</div>
<div class="a" style="left:308px;top:138px;width:341px;height:491px;background:#f0f0f0;border-top:1px solid #f6f6f6;border-left:1px solid #f6f6f6;box-shadow:inset 1px 1px 0 #fff,1px 1px 0 #7a7a7a,2px 2px 0 #6e6e6e,3px 3px 1px rgba(60,60,60,.55),4px 4px 2px rgba(0,0,0,.18)"></div>
<div class="t mt" style="left:331px;top:142px;font-size:12px;line-height:18px;letter-spacing:-0.133px;color:#000">Nová</div>
<div class="t mt" style="left:331px;top:161px;font-size:12px;line-height:18px;letter-spacing:-0.015px;color:#000">Kópia vybranej</div>
<div class="t mt" style="left:331px;top:180px;font-size:12px;line-height:18px;letter-spacing:-0.133px;color:#000">Upraviť</div>
<div class="t mt" style="left:331px;top:199px;font-size:12px;line-height:18px;letter-spacing:-0.287px;color:#000">Varianty | CTRL+B</div>
<div class="t mt" style="left:331px;top:218px;font-size:12px;line-height:18px;letter-spacing:-0.116px;color:#000">Alternatívy | CTRL+N</div>
<div class="t mt" style="left:331px;top:237px;font-size:12px;line-height:18px;letter-spacing:-0.118px;color:#000">Odporúčať | CTRL+M</div>
<div class="t mt" style="left:331px;top:256px;font-size:12px;line-height:18px;letter-spacing:-0.086px;color:#000">Pohyby na karte</div>
<div class="t mt" style="left:331px;top:275px;font-size:12px;line-height:18px;letter-spacing:0.150px;color:#000">Dokumenty</div>
<div class="t mt" style="left:331px;top:294px;font-size:12px;line-height:18px;letter-spacing:-0.017px;color:#000">Hlavný obázok</div>
<div class="t mt" style="left:331px;top:313px;font-size:12px;line-height:18px;letter-spacing:0.053px;color:#000">Dokumenty - označené</div>
<div class="t mt" style="left:331px;top:332px;font-size:12px;line-height:18px;letter-spacing:-0.084px;color:#000">Info - viazané karty</div>
<div class="t mt" style="left:331px;top:351px;font-size:12px;line-height:18px;letter-spacing:-0.180px;color:#000">Dodávatelia</div>
<div class="a" style="left:328px;top:372px;width:301px;height:1px;background:#919191"></div><div class="a" style="left:328px;top:373px;width:301px;height:1px;background:#fdfdfd"></div>
<div class="t mt" style="left:331px;top:377px;font-size:12px;line-height:18px;letter-spacing:-0.071px;color:#000">Variantu - pridať / zmeniť | CTRL+J</div>
<div class="t mt" style="left:331px;top:396px;font-size:12px;line-height:18px;letter-spacing:0.024px;color:#000">Kategóriu - pridať</div>
<div class="t mt" style="left:331px;top:415px;font-size:12px;line-height:18px;letter-spacing:0.056px;color:#000">Kategóriu - odobrať</div>
<div class="t mt" style="left:331px;top:434px;font-size:12px;line-height:18px;letter-spacing:0.120px;color:#000">Kategóriu - info</div>
<div class="a" style="left:328px;top:455px;width:301px;height:1px;background:#919191"></div><div class="a" style="left:328px;top:456px;width:301px;height:1px;background:#fdfdfd"></div>
<div class="t mt" style="left:331px;top:460px;font-size:12px;line-height:18px;letter-spacing:0.000px;color:#000">Hromadná úprava cien</div>
<div class="a" style="left:311px;top:478px;width:335px;height:19px;background:#3399ff"></div>
<div class="t mt" style="left:331px;top:479px;font-size:12px;line-height:18px;letter-spacing:-0.114px;color:#fff">Rozšírené úkony nad označenými kartami</div>
<div class="t mt" style="left:331px;top:498px;font-size:12px;line-height:18px;letter-spacing:-0.080px;color:#000">Skupinu - zmeniť</div>
<div class="t mt" style="left:331px;top:517px;font-size:12px;line-height:18px;letter-spacing:0.047px;color:#000">Dodávateľ - pridať</div>
<div class="t mt" style="left:331px;top:536px;font-size:12px;line-height:18px;letter-spacing:0.022px;color:#000">Dodávateľ - odobrať</div>
<div class="a" style="left:328px;top:557px;width:301px;height:1px;background:#919191"></div><div class="a" style="left:328px;top:558px;width:301px;height:1px;background:#fdfdfd"></div>
<div class="t mt" style="left:331px;top:562px;font-size:12px;line-height:18px;letter-spacing:-0.143px;color:#000">Odstránenie skladových kariet</div>
<div class="t mt" style="left:331px;top:581px;font-size:12px;line-height:18px;letter-spacing:-0.061px;color:#000">Prepočet skladových pohybov na označených kartách.</div>
<div class="t mt" style="left:331px;top:600px;font-size:12px;line-height:18px;letter-spacing:0.000px;color:#000">História (žurnál)</div>
<svg class="a" style="left:315.2px;top:276.4px" width="9.6" height="12.6" viewBox="0 0 10 11" preserveAspectRatio="none"><path d="M1.5 4.2 V8 A3.5 2.2 0 0 0 8.5 8 V3.5 A2.5 1.9 0 0 0 3.5 3.5 V6.3 A1.5 1.4 0 0 0 6.5 6.3 V3.8" fill="none" stroke="#767676" stroke-width="1"/></svg>
<svg class="a" style="left:315.2px;top:314.4px" width="9.6" height="12.6" viewBox="0 0 10 11" preserveAspectRatio="none"><path d="M1.5 4.2 V8 A3.5 2.2 0 0 0 8.5 8 V3.5 A2.5 1.9 0 0 0 3.5 3.5 V6.3 A1.5 1.4 0 0 0 6.5 6.3 V3.8" fill="none" stroke="#767676" stroke-width="1"/></svg>
<div class="a" style="left:313px;top:295px;width:14px;height:13px;border:1px solid #b4c4dc;background:#fff"></div><div class="a" style="left:315px;top:297px;width:10px;height:9px;background:linear-gradient(180deg,#8fc79a 0,#58a868 70%,#9ad0a0 72%,#a8d8b0 100%)"></div><div class="a" style="left:318px;top:298px;width:4px;height:5px;border-radius:2px;background:#3f9452"></div>
</body></html>
